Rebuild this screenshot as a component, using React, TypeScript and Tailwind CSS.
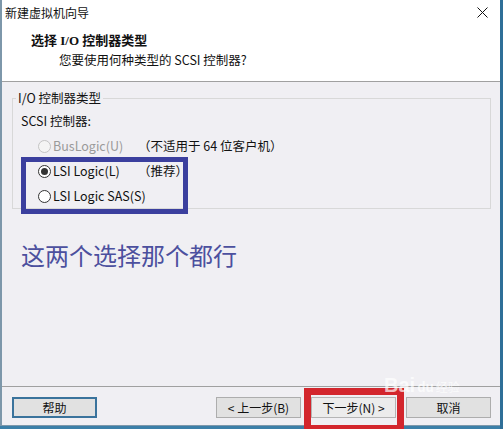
import React from "react";

const ui = { fontFamily: '"Noto Sans CJK SC", "Noto Sans", sans-serif' };
const serifBold = { fontFamily: '"Liberation Serif", "Noto Sans CJK SC", serif' };

const Radio: React.FC<{ checked?: boolean; disabled?: boolean }> = ({ checked, disabled }) => (
  <span
    className={
      "flex items-center justify-center w-[13px] h-[13px] rounded-full border " +
      (disabled ? "border-[#c4c4c4] bg-[#f4f4f4]" : "border-[#333] bg-white")
    }
  >
    {checked && <span className="block w-[7px] h-[7px] rounded-full bg-[#333]" />}
  </span>
);

const Btn: React.FC<{ children: React.ReactNode; focus?: boolean; light?: boolean }> = ({ children, focus, light }) => (
  <div
    className={
      "flex items-center justify-center w-[85px] h-[21px] text-[12px] text-[#111] " +
      (focus
        ? "border-2 border-[#3a739c] bg-[#e1e1e1]"
        : light
          ? "border border-[#b5b5b5] bg-[#ececec]"
          : "border border-[#adadad] bg-[#e1e1e1]")
    }
  >
    {children}
  </div>
);

const App: React.FC = () => {
  return (
    <div className="relative w-[503px] h-[429px] overflow-hidden bg-[#3b7fa8] flex" style={ui}>
      {/* window */}
      <div className="w-[500px] h-[426px] flex flex-col border-l-2 border-b border-[#7d97aa] bg-[#f0eff3]">
        {/* header */}
        <div className="h-[82px] bg-white border-b border-[#a0a0a0] flex flex-col">
          <div className="h-[25px] flex items-center justify-between pl-[3px] pr-[10px]">
            <span className="text-[12px] text-[#111]">新建虚拟机向导</span>
            <svg width="11" height="11" viewBox="0 0 11 11" className="mr-[2px]">
              <line x1="0.5" y1="0.5" x2="10.5" y2="10.5" stroke="#111" strokeWidth="1" />
              <line x1="10.5" y1="0.5" x2="0.5" y2="10.5" stroke="#111" strokeWidth="1" />
            </svg>
          </div>
          <div className="mt-[8px] pl-[29px] text-[13px] leading-[16px] font-bold text-[#111]" style={serifBold}>
            选择 I/O 控制器类型
          </div>
          <div className="mt-[3px] pl-[57px] text-[12.5px] leading-[16px] text-[#111]">您要使用何种类型的 SCSI 控制器?</div>
        </div>

        {/* body */}
        <div className="flex-1 flex flex-col pt-[8px]">
          <fieldset className="ml-[10px] mr-[9px] border border-[#d8d8d8] pl-[8px] pb-[4px]">
            <legend className="-ml-[5px] px-[2px] text-[12.5px] leading-[16px] text-[#111]">I/O 控制器类型</legend>
            <div className="mt-[7px] text-[12.5px] leading-[16px] text-[#111]">SCSI 控制器:</div>
            <div className="mt-[9px] flex flex-col gap-[9px] pl-[17px] text-[12.5px] leading-[16px]">
              <div className="flex items-center">
                <div className="w-[100px] flex items-center gap-[2px]">
                  <Radio disabled />
                  <span className="text-[#9a9a9a]">BusLogic(U)</span>
                </div>
                <span className="text-[#111]">（不适用于 64 位客户机）</span>
              </div>
              <div className="flex items-center">
                <div className="w-[100px] flex items-center gap-[2px]">
                  <Radio checked />
                  <span className="text-[#111]">LSI Logic(L)</span>
                </div>
                <span className="text-[#111]">（推荐）</span>
              </div>
              <div className="flex items-center gap-[2px]">
                <Radio />
                <span className="text-[#111]">LSI Logic SAS(S)</span>
              </div>
            </div>
          </fieldset>
          <div className="mt-[30px] ml-[19px] text-[24px] leading-[32px] text-[#4c509e]">这两个选择那个都行</div>
        </div>

        {/* footer */}
        <div className="h-[39px] border-t border-[#a0a0a0] flex items-start pt-[10px] pl-[10px] pr-[9px]">
          <Btn focus>帮助</Btn>
          <div className="flex-1" />
          <div className="flex gap-[10px]">
            <Btn>&lt; 上一步(B)</Btn>
            <Btn light>下一步(N) &gt;</Btn>
            <Btn>取消</Btn>
          </div>
        </div>
      </div>
      <div className="flex-1 bg-[#2f6f98]" />

      {/* annotations */}
      <div className="absolute left-[21px] top-[157px] w-[167px] h-[57px] border-[5px] border-[#3b3f9e]" />
      <div className="absolute left-[304px] top-[388px] w-[100px] h-[44px] border-[7px] border-[#d3262d]" />

      {/* watermark */}
      <div className="absolute left-[384px] top-[374px] flex items-start gap-[2px] text-white/70 pointer-events-none">
        <span className="text-[20px] leading-[22px] font-bold" style={{ fontFamily: '"Liberation Sans", sans-serif' }}>
          Bai
        </span>
        <span className="mt-[5px] text-[13px] leading-[16px] font-bold">du</span>
        <span className="mt-[5px] text-[12px] leading-[15px]">经验</span>
      </div>
    </div>
  );
};

export default App;
